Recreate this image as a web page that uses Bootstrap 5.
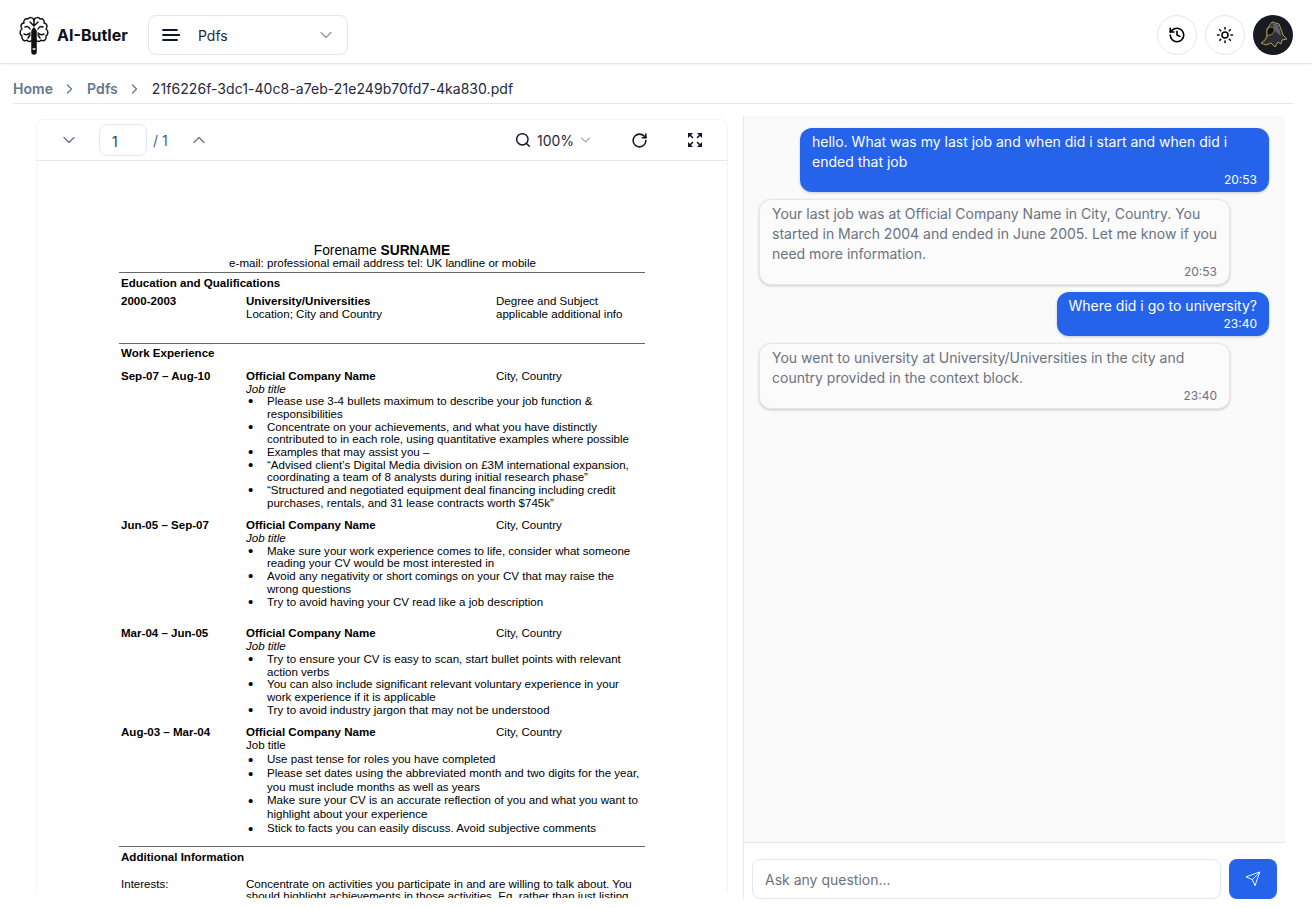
<!DOCTYPE html>
<html lang="en">
<head>
<meta charset="utf-8">
<title>AI-Butler</title>
<link href="https://cdn.jsdelivr.net/npm/bootstrap@5.3.0/dist/css/bootstrap.min.css" rel="stylesheet">
<style>
html,body{height:100%}
body{font-family:Inter,"Liberation Sans",sans-serif;font-size:14px;color:#0f172a;background:#fff;overflow:hidden}
.app-head{height:64px;padding:15px 19px 0 18px;border-bottom:1px solid #e5e7eb;box-shadow:0 1px 2px rgba(0,0,0,.05)}
.brand-name{font-size:16px;font-weight:700;color:#0b0f19;margin-left:7px;width:91px}
.nav-select{width:200px;height:40px;border:1px solid #e2e8f0;border-radius:8px;padding:0 15px 0 13px}
.nav-select span{margin-left:18px;color:#1e293b}
.round-btn{width:40px;height:40px;border:1px solid #e2e8f0;border-radius:50%;background:#fff;padding:0}
.crumbs{height:40px;margin:0 19px 0 13px;padding-top:10px;border-bottom:1px solid #e5e7eb;line-height:1;letter-spacing:.06px}
.crumbs b{font-weight:600;color:#64748b}
.crumbs svg{margin:0 14px 0 13px}
.crumbs .file{color:#1e293b}
.work{height:794px;padding-left:36px}
.viewer{width:692px;height:774px;margin-top:15px;border:1px solid #f1f5f9;border-bottom:0;border-radius:8px 8px 0 0}
.view-bar{height:41px;border-bottom:1px solid #e5e7eb}
.page-input{width:48px;height:32px;border:1px solid #e2e8f0;border-radius:8px;padding:2px 0 0 12px;line-height:30px;color:#1e3a5f;margin-left:50px}
.page-total{color:#3b6590;margin-left:6px;width:40px}
.zoom-txt{color:#1e293b;font-size:14px;margin-left:6px}
.cv{height:737px;overflow:hidden;width:526px;margin-left:82px;padding-top:83px;font-family:"Liberation Sans",Arial,sans-serif;font-size:11.55px;line-height:12.7px;color:#000}
.cv-name{font-size:13.8px;text-align:center;line-height:13px}
.cv-mail{text-align:center;line-height:12px;margin-left:1px}
.cv-rule{height:1px;background:#666}
.cv-head{font-weight:700;padding-left:2px}
.cv-row{display:grid;grid-template-columns:127px 250px 1fr}
.cv-row>:first-child{padding-left:2px}
.cv-row b{font-weight:700}
.cv-sub{margin-left:127px}
.cv ul{margin:0 0 0 127px;padding:0;list-style:none}
.cv li{display:flex}
.cv li::before{content:"•";flex:none;width:21px;padding-left:2px;font-size:15px}
.cv-loose{line-height:13.8px}
.chat{width:542px;height:783px;margin-left:15px;margin-top:12px;border-left:1px solid #e5e7eb}
.chat-log{height:727px;flex:none;background:#fafafa;border-bottom:1px solid #e5e7eb;padding:12px 16px 12px 15px;gap:7px}
.bubble{box-sizing:content-box;border-radius:12px;padding:4px 12px;line-height:20px;font-size:14px}
.bubble-me{max-width:445px;background:#2563eb;color:#fff;box-shadow:0 1px 3px rgba(0,0,0,.2)}
.bubble-bot{max-width:447px;padding-right:10px;background:#fbfbfb;color:#6b7280;border:1px solid #e5e7eb;box-shadow:0 1px 3px rgba(0,0,0,.2)}
.bubble-bot .stamp{padding-right:2px}
.stamp{font-size:12px;line-height:16px;text-align:right}
.ask{padding:16px 8px 0 8px;gap:8px}
.ask-input{flex:1;height:40px;border:1px solid #e2e8f0;border-radius:8px;padding:1px 12px 0;line-height:38px;color:#6b7280;background:#fff}
.ask-send{width:48px;height:40px;border-radius:8px;background:#2563eb;border:0;padding:0}
svg{display:block;flex:none}
.ln{fill:none;stroke:currentColor;stroke-linecap:round;stroke-linejoin:round}
.brand-mark{margin-top:1px;color:#111}
</style>
</head>
<body class="d-flex flex-column">
<header class="app-head d-flex">
  <svg width="32" height="40" viewBox="0 0 32 40" class="ln brand-mark" stroke-width="1.5">
    <path d="M16 4c-1-3-5-3-6-1-3-1-5 2-4 4-3 0-4 4-2 6-3 2-2 6 0 7-1 3 2 6 5 4 1 2 4 2 5 0"/>
    <path d="M16 4c1-3 5-3 6-1 3-1 5 2 4 4 3 0 4 4 2 6 3 2 2 6 0 7 1 3-2 6-5 4-1 2-4 2-5 0"/>
    <path d="M16 3v7M12 6l4 4 4-4M7 11c2-1 4 0 5 2M25 11c-2-1-4 0-5 2M6 18c2 1 4 1 6-1M26 18c-2 1-4 1-6-1M10 22l2-3M22 22l-2-3"/>
    <path d="M14 15l2-3 2 3v21a2 2 0 0 1-4 0z" fill="#111"/><path d="M15.200 33h1.600" stroke="#fff"/>
  </svg>
  <div class="brand-name d-flex align-items-center" style="height:40px">AI-Butler</div>
  <div class="nav-select d-flex align-items-center">
    <svg width="18" height="14" viewBox="0 0 18 14" class="ln" stroke-width="1.800"><path d="M1 2h14M1 7h16.500M1 12h14"/></svg>
    <span class="flex-grow-1">Pdfs</span>
    <svg width="12" height="8" viewBox="0 0 12 8" class="ln" style="color:#8a94a3" stroke-width="1.200"><path d="M1 1.500l5 5 5-5"/></svg>
  </div>
  <div class="ms-auto d-flex gap-2">
    <button class="round-btn d-flex align-items-center justify-content-center" aria-label="History"><svg width="18" height="18" viewBox="0 0 24 24" class="ln" stroke-width="2.200"><path d="M3 12a9 9 0 1 0 9-9 9.750 9.750 0 0 0-6.740 2.740L3 8"/><path d="M3 3v5h5"/><path d="M12 7v5l4 2"/></svg></button>
    <button class="round-btn d-flex align-items-center justify-content-center" aria-label="Theme"><svg width="18" height="18" viewBox="0 0 24 24" class="ln" stroke-width="2"><circle cx="12" cy="12" r="4"/><path d="M12 2v2M12 20v2M4.930 4.930l1.410 1.410M17.660 17.660l1.410 1.410M2 12h2M20 12h2M6.340 17.660l-1.410 1.410M19.070 4.930l-1.410 1.410"/></svg></button>
    <svg width="40" height="40" viewBox="0 0 40 40" role="img" aria-label="Avatar"><circle cx="20" cy="20" r="20" fill="#181b22"/><path d="M14 14L19 7l7 2 2 5 2 6 4 4-5 1-1 4-3-2-3 5-4-4-5 2-5-2 4-3 2-4z" fill="#2b2e37" stroke="#b89a55" stroke-width="1"/><path d="M19 8l6 2 2 6 1 5-5-4-2-5z" fill="#5d626d"/><path d="M14 15c2-3 5-4 7-2 1 3-1 7-5 7l-2 1z" fill="#0b0c10" stroke="#c4a55c" stroke-width=".8"/></svg>
  </div>
</header>
<nav class="crumbs d-flex align-items-center" aria-label="Breadcrumb">
  <b>Home</b>
  <svg width="7" height="10" viewBox="0 0 7 10" class="ln" style="color:#64748b" stroke-width="1.200"><path d="M1.500 1l4 4-4 4"/></svg>
  <b>Pdfs</b>
  <svg width="7" height="10" viewBox="0 0 7 10" class="ln" style="color:#64748b" stroke-width="1.200"><path d="M1.500 1l4 4-4 4"/></svg>
  <span class="file">21f6226f-3dc1-40c8-a7eb-21e249b70fd7-4ka830.pdf</span>
</nav>
<main class="work d-flex">
  <section class="viewer">
    <div class="view-bar d-flex align-items-center">
      <svg width="12" height="8" viewBox="0 0 12 8" class="ln" style="color:#64748b;margin-left:26px;margin-right:-26px" stroke-width="1.300"><path d="M1 1.500l5 5 5-5"/></svg>
      <div class="page-input">1</div>
      <div class="page-total">/ 1</div>
      <svg width="12" height="8" viewBox="0 0 12 8" class="ln" style="color:#64748b" stroke-width="1.300"><path d="M1 6.500l5-5 5 5"/></svg>
      <div class="d-flex align-items-center" style="margin-left:310px;width:79px">
        <svg width="16" height="16" viewBox="0 0 24 24" class="ln" stroke-width="2.200"><circle cx="11" cy="11" r="8.500"/><path d="M21.500 21.500l-4.300-4.300"/></svg>
        <span class="zoom-txt">100%</span>
        <svg width="9" height="6" viewBox="0 0 12 8" class="ln" style="color:#94a3b8;margin-left:7px" stroke-width="1.500"><path d="M1 1.500l5 5 5-5"/></svg>
      </div>
      <svg width="17" height="17" viewBox="0 0 24 24" class="ln" stroke-width="2.200" style="margin-left:37px"><path d="M21 12a9 9 0 1 1-9-9c2.520 0 4.930 1 6.740 2.740L21 8"/><path d="M21 3v5h-5"/></svg>
      <svg width="16" height="16" viewBox="0 0 16 16" style="margin-left:39px" class="ln" stroke-width="1.600"><path d="M2 2l3.500 3.500M14 2l-3.500 3.500M2 14l3.500-3.500M14 14l-3.500-3.500"/><path d="M1 1h5L1 6zM15 1h-5l5 5zM1 15h5l-5-5zM15 15h-5l5-5z" fill="currentColor" stroke="none"/></svg>
    </div>
    <div class="cv">
      <div class="cv-name">Forename <b>SURNAME</b></div>
      <div class="cv-mail">e-mail: professional email address tel: UK landline or mobile</div>
      <div class="cv-rule" style="margin-top:3px"></div>
      <div class="cv-head" style="margin-top:4px">Education and Qualifications</div>
      <div class="cv-row" style="margin-top:5px"><b>2000-2003</b><b>University/Universities</b><span>Degree and Subject</span></div>
      <div class="cv-row" style="margin-top:.5px"><span></span><span>Location; City and Country</span><span>applicable additional info</span></div>
      <div class="cv-rule" style="margin-top:22.500px"></div>
      <div class="cv-head" style="margin-top:3px">Work Experience</div>
      <div class="cv-row" style="margin-top:10px"><b>Sep-07 – Aug-10</b><b>Official Company Name</b><span>City, Country</span></div>
      <div class="cv-sub"><i>Job title</i></div>
      <ul>
        <li><span>Please use 3-4 bullets maximum to describe your job function &amp; responsibilities</span></li>
        <li><span>Concentrate on your achievements, and what you have distinctly contributed to in each role, using quantitative examples where possible</span></li>
        <li><span>Examples that may assist you –</span></li>
        <li><span>“Advised client’s Digital Media division on £3M international expansion, coordinating a team of 8 analysts during initial research phase”</span></li>
        <li><span>“Structured and negotiated equipment deal financing including credit purchases, rentals, and 31 lease contracts worth $745k”</span></li>
      </ul>
      <div class="cv-row" style="margin-top:9.800px"><b>Jun-05 – Sep-07</b><b>Official Company Name</b><span>City, Country</span></div>
      <div class="cv-sub"><i>Job title</i></div>
      <ul>
        <li><span>Make sure your work experience comes to life, consider what someone reading your CV would be most interested in</span></li>
        <li><span>Avoid any negativity or short comings on your CV that may raise the wrong questions</span></li>
        <li><span>Try to avoid having your CV read like a job description</span></li>
      </ul>
      <div class="cv-row" style="margin-top:19.200px"><b>Mar-04 – Jun-05</b><b>Official Company Name</b><span>City, Country</span></div>
      <div class="cv-sub"><i>Job title</i></div>
      <ul>
        <li><span>Try to ensure your CV is easy to scan, start bullet points with relevant action verbs</span></li>
        <li><span>You can also include significant relevant voluntary experience in your work experience if it is applicable</span></li>
        <li><span>Try to avoid industry jargon that may not be understood</span></li>
      </ul>
      <div class="cv-row" style="margin-top:10px"><b>Aug-03 – Mar-04</b><b>Official Company Name</b><span>City, Country</span></div>
      <div class="cv-sub">Job title</div>
      <ul class="cv-loose" style="margin-top:1.300px">
        <li><span>Use past tense for roles you have completed</span></li>
        <li><span>Please set dates using the abbreviated month and two digits for the year, you must include months as well as years</span></li>
        <li><span>Make sure your CV is an accurate reflection of you and what you want to highlight about your experience</span></li>
        <li><span>Stick to facts you can easily discuss. Avoid subjective comments</span></li>
      </ul>
      <div class="cv-rule" style="margin-top:10px"></div>
      <div class="cv-head" style="margin-top:4px">Additional Information</div>
      <div class="cv-row" style="margin-top:14px;grid-template-columns:127px 1fr"><span>Interests:</span><span>Concentrate on activities you participate in and are willing to talk about. You should highlight achievements in those activities. Eg. rather than just listing</span></div>
    </div>
  </section>
  <section class="chat d-flex flex-column">
    <div class="chat-log d-flex flex-column">
      <div class="bubble bubble-me align-self-end">hello. What was my last job and when did i start and when did i ended that job<div class="stamp">20:53</div></div>
      <div class="bubble bubble-bot align-self-start">Your last job was at Official Company Name in City, Country. You started in March 2004 and ended in June 2005. Let me know if you need more information.<div class="stamp">20:53</div></div>
      <div class="bubble bubble-me align-self-end">Where did i go to university?<div class="stamp">23:40</div></div>
      <div class="bubble bubble-bot align-self-start">You went to university at University/Universities in the city and country provided in the context block.<div class="stamp">23:40</div></div>
    </div>
    <div class="ask d-flex">
      <div class="ask-input">Ask any question...</div>
      <button class="ask-send d-flex align-items-center justify-content-center" aria-label="Send"><svg width="16" height="16" viewBox="0 0 24 24" class="ln" style="color:#fff" stroke-width="1.400"><path d="m22 2-7 20-4-9-9-4Z"/><path d="M22 2 11 13"/></svg></button>
    </div>
  </section>
</main>
<script src="https://cdn.jsdelivr.net/npm/bootstrap@5.3.0/dist/js/bootstrap.bundle.min.js"></script>
</body>
</html>
